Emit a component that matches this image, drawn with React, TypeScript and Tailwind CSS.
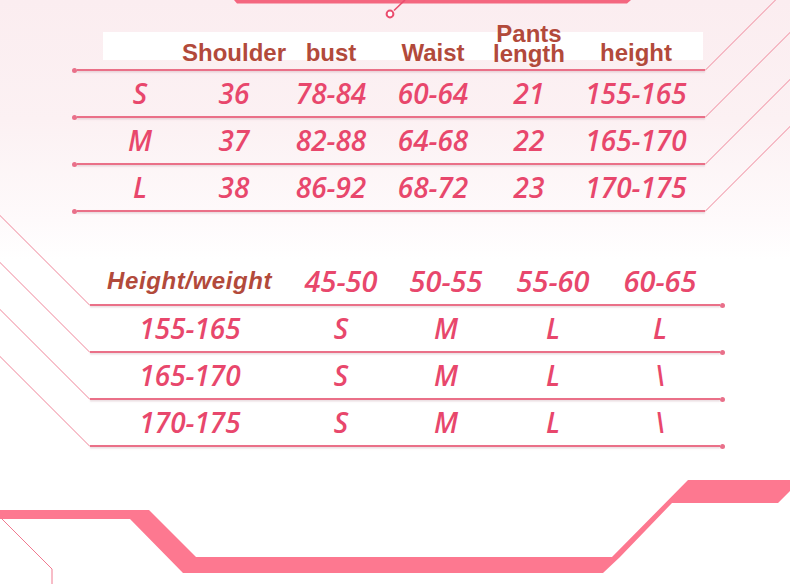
import React from "react";

const pink = "text-[#e8476c]";

const sizeRows = [
  ["S", "36", "78-84", "60-64", "21", "155-165"],
  ["M", "37", "82-88", "64-68", "22", "165-170"],
  ["L", "38", "86-92", "68-72", "23", "170-175"],
];

const weightHead = ["45-50", "50-55", "55-60", "60-65"];

const weightRows = [
  ["155-165", "S", "M", "L", "L"],
  ["165-170", "S", "M", "L", "\\"],
  ["170-175", "S", "M", "L", "\\"],
];

// line with the dot on the left (first table)
const DividerLeft = () => (
  <div className="flex h-[6px] items-center">
    <span className="size-[5px] shrink-0 rounded-full bg-[#e9708a]" />
    <div className="h-[1.5px] flex-1 bg-[#ea7088] shadow-[0_1.5px_1.5px_rgba(190,150,160,0.35)]" />
  </div>
);

// line with the dot on the right (second table)
const DividerRight = () => (
  <div className="flex h-[6px] items-center">
    <div className="h-[1.5px] flex-1 bg-[#ea7088] shadow-[0_1.5px_1.5px_rgba(190,150,160,0.35)]" />
    <span className="size-[5px] shrink-0 rounded-full bg-[#e9708a]" />
  </div>
);

const Decor = () => (
  <svg className="pointer-events-none absolute inset-0" width="790" height="584" viewBox="0 0 790 584">
    {/* top bar + pin */}
    <polygon points="234,0 631,0 627,3.5 237,3.5" fill="#f4667f" />
    <line x1="394" y1="10.5" x2="405" y2="0" stroke="#ea4d6e" strokeWidth="1.6" />
    <circle cx="390" cy="14" r="3.4" fill="#fff" stroke="#ea4d6e" strokeWidth="2" />

    {/* right diagonals of the first table */}
    <g stroke="#ef8498" strokeWidth="1" fill="none">
      <line x1="705" y1="70.5" x2="776" y2="-0.5" />
      <line x1="705" y1="117.5" x2="791" y2="31.5" />
      <line x1="705" y1="164.5" x2="791" y2="78.5" />
      <line x1="705" y1="211.5" x2="791" y2="125.5" />
    </g>

    {/* left diagonals of the second table */}
    <g stroke="#ef8498" strokeWidth="1" fill="none">
      <line x1="90" y1="305.5" x2="-1" y2="214.5" />
      <line x1="90" y1="352.5" x2="-1" y2="261.5" />
      <line x1="90" y1="399.5" x2="-1" y2="308.5" />
      <line x1="90" y1="446.5" x2="-1" y2="355.5" />
    </g>

    {/* bottom band */}
    <polygon
      points="0,510 149,510 196,557 612,557 688,480 792,480 790,491 778,503 672,503 620,557 603,573 183,573 130,519 0,519"
      fill="#fd7890"
    />
    <polyline points="1,518 52,569 52,584" stroke="#f07a90" strokeWidth="1" fill="none" />
  </svg>
);

const headCell = "flex justify-center whitespace-nowrap pb-[2px] leading-[24px]";

export default function App() {
  return (
    <div className="relative h-[584px] w-[790px] overflow-hidden bg-[linear-gradient(180deg,#fbedf0_0px,#fcf1f3_120px,#fefafb_220px,#ffffff_260px)]">
      <Decor />

      <div className="relative flex flex-col pt-[22px]">
        {/* size table */}
        <div className="ml-[72px] w-[633px]">
          <div className="ml-[31px] h-[45px] w-[600px] bg-[linear-gradient(to_bottom,transparent_10px,#ffffff_10px,#ffffff_38px,transparent_38px)]">
            <div className="grid h-full grid-cols-[85px_92px_102px_102px_90px_124px] items-end font-['Liberation_Sans',Arial,sans-serif] text-[24px] font-bold text-[#b24a3b]">
              <div />
              <div className={headCell}>Shoulder</div>
              <div className={headCell}>bust</div>
              <div className={headCell}>Waist</div>
              <div className="flex flex-col items-center pb-[3px] leading-[20px]">
                <span>Pants</span>
                <span>length</span>
              </div>
              <div className={headCell}>height</div>
            </div>
          </div>
          <DividerLeft />
          {sizeRows.map((row) => (
            <React.Fragment key={row[0]}>
              <div
                className={`grid h-[41px] grid-cols-[96px_92px_102px_102px_90px_124px] items-center pl-[20px] font-['Open_Sans',sans-serif] text-[28px] font-semibold italic leading-[41px] ${pink}`}
              >
                {row.map((cell, i) => (
                  <div key={i} className="flex justify-center whitespace-nowrap">
                    {cell}
                  </div>
                ))}
              </div>
              <DividerLeft />
            </React.Fragment>
          ))}
        </div>

        {/* height / weight table */}
        <div className="ml-[90px] mt-[46px] w-[635px]">
          <div className="grid h-[42px] grid-cols-[200px_102px_108px_106px_108px] items-center">
            <div className="pl-[17px] font-['Liberation_Sans',Arial,sans-serif] text-[24px] font-bold italic tracking-[0.6px] text-[#b24a3b]">
              Height/weight
            </div>
            {weightHead.map((h) => (
              <div
                key={h}
                className={`flex justify-center whitespace-nowrap font-['Open_Sans',sans-serif] text-[29px] font-semibold italic leading-[42px] ${pink}`}
              >
                {h}
              </div>
            ))}
          </div>
          <DividerRight />
          {weightRows.map((row) => (
            <React.Fragment key={row[0]}>
              <div
                className={`grid h-[41px] grid-cols-[200px_102px_108px_106px_108px] items-center font-['Open_Sans',sans-serif] text-[28px] font-semibold italic leading-[41px] ${pink}`}
              >
                {row.map((cell, i) => (
                  <div key={i} className="flex justify-center whitespace-nowrap">
                    {cell}
                  </div>
                ))}
              </div>
              <DividerRight />
            </React.Fragment>
          ))}
        </div>
      </div>
    </div>
  );
}
